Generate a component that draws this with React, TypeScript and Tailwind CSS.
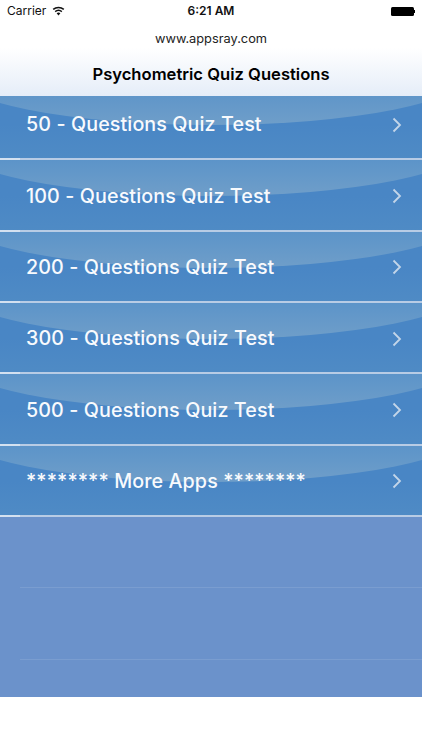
const items = [
  "50 - Questions Quiz Test",
  "100 - Questions Quiz Test",
  "200 - Questions Quiz Test",
  "300 - Questions Quiz Test",
  "500 - Questions Quiz Test",
  "******** More Apps ********",
];

function Row({ label }: { label: string }) {
  return (
    <div className="relative h-[71.33px] overflow-hidden bg-gradient-to-b from-[#4986c5] via-[#4986c5] to-[#4f8bc5]">
      <div className="absolute left-[-49px] top-[-70px] h-[106px] w-[520px] rounded-[50%] bg-gradient-to-b from-[#5c94c9] from-[66%] to-[#6f9ec9]" />
      <div className="relative flex h-full items-center justify-between pl-[26px] pr-[20px]">
        <span className="pt-[1px] text-[19.7px] font-medium tracking-[0.1px] text-[#f8fafd]">{label}</span>
        <svg width="10" height="16" viewBox="0 0 10 16" fill="none" stroke="#c3d5e9" strokeWidth="1.8">
          <path d="M1.5 1.5 L8 8 L1.5 14.5" />
        </svg>
      </div>
      <div className="absolute inset-x-0 bottom-0 h-[2px] bg-[#b8cce5]">
        <div className="h-full w-[20px] bg-[#d4e1f0]" />
      </div>
    </div>
  );
}

export default function App() {
  return (
    <div className="h-[750px] overflow-hidden bg-white font-['Inter','Liberation_Sans',sans-serif]">
      <div className="relative z-10 h-[96px] bg-gradient-to-b from-white from-50% to-[#e5edf8]">
        <div className="grid h-[22px] grid-cols-3 items-center pl-[7px] pr-[7px] text-[12px] text-[#111]">
          <div className="flex items-center gap-[6px]">
            <span>Carrier</span>
            <svg width="13" height="10" viewBox="0 0 13 10" fill="#111">
              <path d="M6.5 9.6 L4.6 7.3 a3 3 0 0 1 3.8 0 Z" />
              <path d="M3.6 6.2 L2.7 5.1 a5.9 5.9 0 0 1 7.6 0 L9.4 6.2 a4.5 4.5 0 0 0 -5.8 0 Z" />
              <path d="M1.7 3.9 L0.7 2.8 a9 9 0 0 1 11.6 0 L11.3 3.9 a7.5 7.5 0 0 0 -9.6 0 Z" />
            </svg>
          </div>
          <span className="text-center font-semibold">6:21 AM</span>
          <div className="flex items-center justify-end">
            <div className="h-[9px] w-[23px] rounded-[1.5px] bg-black" />
            <div className="h-[3px] w-[1px] bg-black" />
          </div>
        </div>
        <div className="mt-[9px] text-center text-[12.8px] leading-[16px] text-[#222]">www.appsray.com</div>
        <div className="mt-[16px] text-center text-[16.6px] font-semibold leading-[22px] text-black">Psychometric Quiz Questions</div>
      </div>
      <div className="-mt-[7px] h-[608px] bg-[#6b92cb]">
        {items.map((label) => (
          <Row key={label} label={label} />
        ))}
        <div className="ml-[20px] h-[71.33px] border-b border-[#7a9dd0]" />
        <div className="ml-[20px] h-[71.33px] border-b border-[#7a9dd0]" />
      </div>
    </div>
  );
}
